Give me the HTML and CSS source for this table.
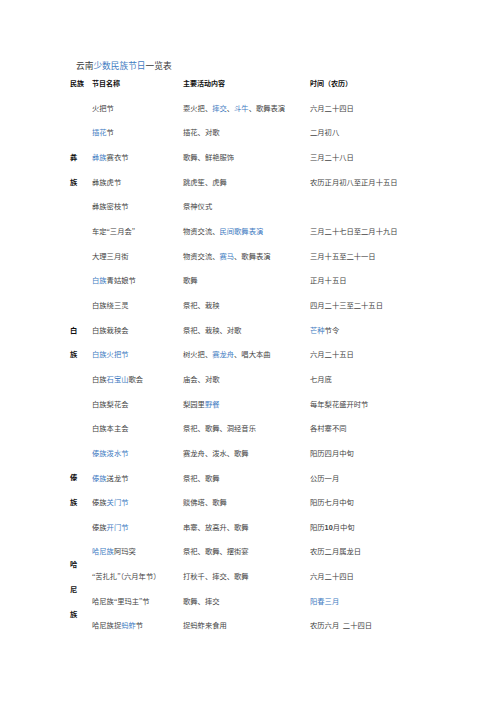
FILE: index.html
```html
<!DOCTYPE html>
<html lang="zh">
<head>
<meta charset="utf-8">
<title>云南少数民族节日一览表</title>
<link rel="stylesheet" href="styles.css">
</head>
<body>
<div class="page">
  <div class="title">云南<span class="lk">少数民族节日</span>一览表</div>
  <div class="table">
    <div class="h c1">民族</div><div class="h c2">节目名称</div><div class="h c3">主要活动内容</div><div class="h c4">时间（农历）</div>

    <div class="grp g-yi"><span>彝</span><span>族</span></div>
    <div class="grp g-bai"><span>白</span><span>族</span></div>
    <div class="grp g-dai"><span>傣</span><span>族</span></div>
    <div class="grp g-hani"><span>哈</span><span>尼</span><span>族</span></div>

    <div class="c2">火把节</div><div class="c3">耍火把、<span class="lk">摔交</span>、<span class="lk">斗牛</span>、歌舞表演</div><div class="c4">六月二十四日</div>
    <div class="c2"><span class="lk">插花</span>节</div><div class="c3">插花、对歌</div><div class="c4">二月初八</div>
    <div class="c2"><span class="lk">彝族</span>赛衣节</div><div class="c3">歌舞、鲜艳服饰</div><div class="c4">三月二十八日</div>
    <div class="c2">彝族虎节</div><div class="c3">跳虎笙、虎舞</div><div class="c4">农历正月初八至正月十五日</div>
    <div class="c2">彝族密枝节</div><div class="c3">祭神仪式</div><div class="c4"></div>
    <div class="c2">车定“三月会”</div><div class="c3">物资交流、<span class="lk">民间歌舞表演</span></div><div class="c4">三月二十七日至二月十九日</div>
    <div class="c2">大理三月街</div><div class="c3">物资交流、<span class="lk">赛马</span>、歌舞表演</div><div class="c4">三月十五至二十一日</div>
    <div class="c2"><span class="lk">白族</span>青姑娘节</div><div class="c3">歌舞</div><div class="c4">正月十五日</div>
    <div class="c2">白族绕三灵</div><div class="c3">祭祀、栽秧</div><div class="c4">四月二十三至二十五日</div>
    <div class="c2">白族栽秧会</div><div class="c3">祭祀、栽秧、对歌</div><div class="c4"><span class="lk">芒种</span>节令</div>
    <div class="c2"><span class="lk">白族火把节</span></div><div class="c3">树火把、<span class="lk">赛龙舟</span>、唱大本曲</div><div class="c4">六月二十五日</div>
    <div class="c2">白族<span class="lk">石宝山</span>歌会</div><div class="c3">庙会、对歌</div><div class="c4">七月底</div>
    <div class="c2">白族梨花会</div><div class="c3">梨园里<span class="lk">野餐</span></div><div class="c4">每年梨花盛开时节</div>
    <div class="c2">白族本主会</div><div class="c3">祭祀、歌舞、洞经音乐</div><div class="c4">各村寨不同</div>
    <div class="c2"><span class="lk">傣族泼水节</span></div><div class="c3">赛龙舟、泼水、歌舞</div><div class="c4">阳历四月中旬</div>
    <div class="c2"><span class="lk">傣族</span>送龙节</div><div class="c3">祭祀、歌舞</div><div class="c4">公历一月</div>
    <div class="c2">傣族<span class="lk">关门节</span></div><div class="c3">赕佛塔、歌舞</div><div class="c4">阳历七月中旬</div>
    <div class="c2">傣族<span class="lk">开门节</span></div><div class="c3">串寨、放高升、歌舞</div><div class="c4">阳历<b class="num">10</b>月中旬</div>
    <div class="c2"><span class="lk">哈尼族</span>阿玛突</div><div class="c3">祭祀、歌舞、摆街宴</div><div class="c4">农历二月属龙日</div>
    <div class="c2">“苦扎扎”（六月年节）</div><div class="c3">打秋千、摔交、歌舞</div><div class="c4">六月二十四日</div>
    <div class="c2">哈尼族“里玛主”节</div><div class="c3">歌舞、摔交</div><div class="c4"><span class="lk">阳春三月</span></div>
    <div class="c2">哈尼族捉<span class="lk">蚂蚱</span>节</div><div class="c3">捉蚂蚱来食用</div><div class="c4">农历六月&nbsp;&nbsp;二十四日</div>
  </div>
</div>
</body>
</html>
```

FILE: styles.css
```css
html, body {
  margin: 0;
  padding: 0;
  background: #ffffff;
}

body {
  font-family: "Liberation Serif", "Noto Sans CJK SC", serif;
  color: #444444;
}

.page {
  padding: 60px 0 0 70px;
}

.title {
  margin-left: 6px;
  font-size: 8.7px;
  line-height: 12px;
  height: 12px;
  color: #3a3a3a;
  font-family: "Liberation Serif", "Noto Sans CJK SC", serif;
}

.lk {
  color: #3f7cc2;
}

.table {
  display: grid;
  grid-template-columns: 22px 91px 127px 150px;
  grid-auto-rows: 24.67px;
  font-family: "Liberation Serif", "Noto Sans CJK SC", serif;
  font-size: 7.3px;
  line-height: 24.67px;
  white-space: nowrap;
}

.c1 { grid-column: 1; }
.c2 { grid-column: 2; }
.c3 { grid-column: 3; }
.c4 { grid-column: 4; }

.h {
  font-weight: 700;
  color: #111111;
  font-size: 7px;
}

.num {
  font-family: "Liberation Sans", sans-serif;
  font-weight: 700;
}

.grp {
  grid-column: 1;
  display: flex;
  flex-direction: column;
  justify-content: center;
  font-weight: 700;
  color: #111111;
  font-size: 7.3px;
}

.grp span {
  display: block;
  line-height: 24.67px;
}

.g-yi { grid-row: 4 / span 2; }
.g-bai { grid-row: 11 / span 2; }
.g-dai { grid-row: 17 / span 2; }
.g-hani { grid-row: 20 / span 4; }
.g-hani span { line-height: 25px; }
```
